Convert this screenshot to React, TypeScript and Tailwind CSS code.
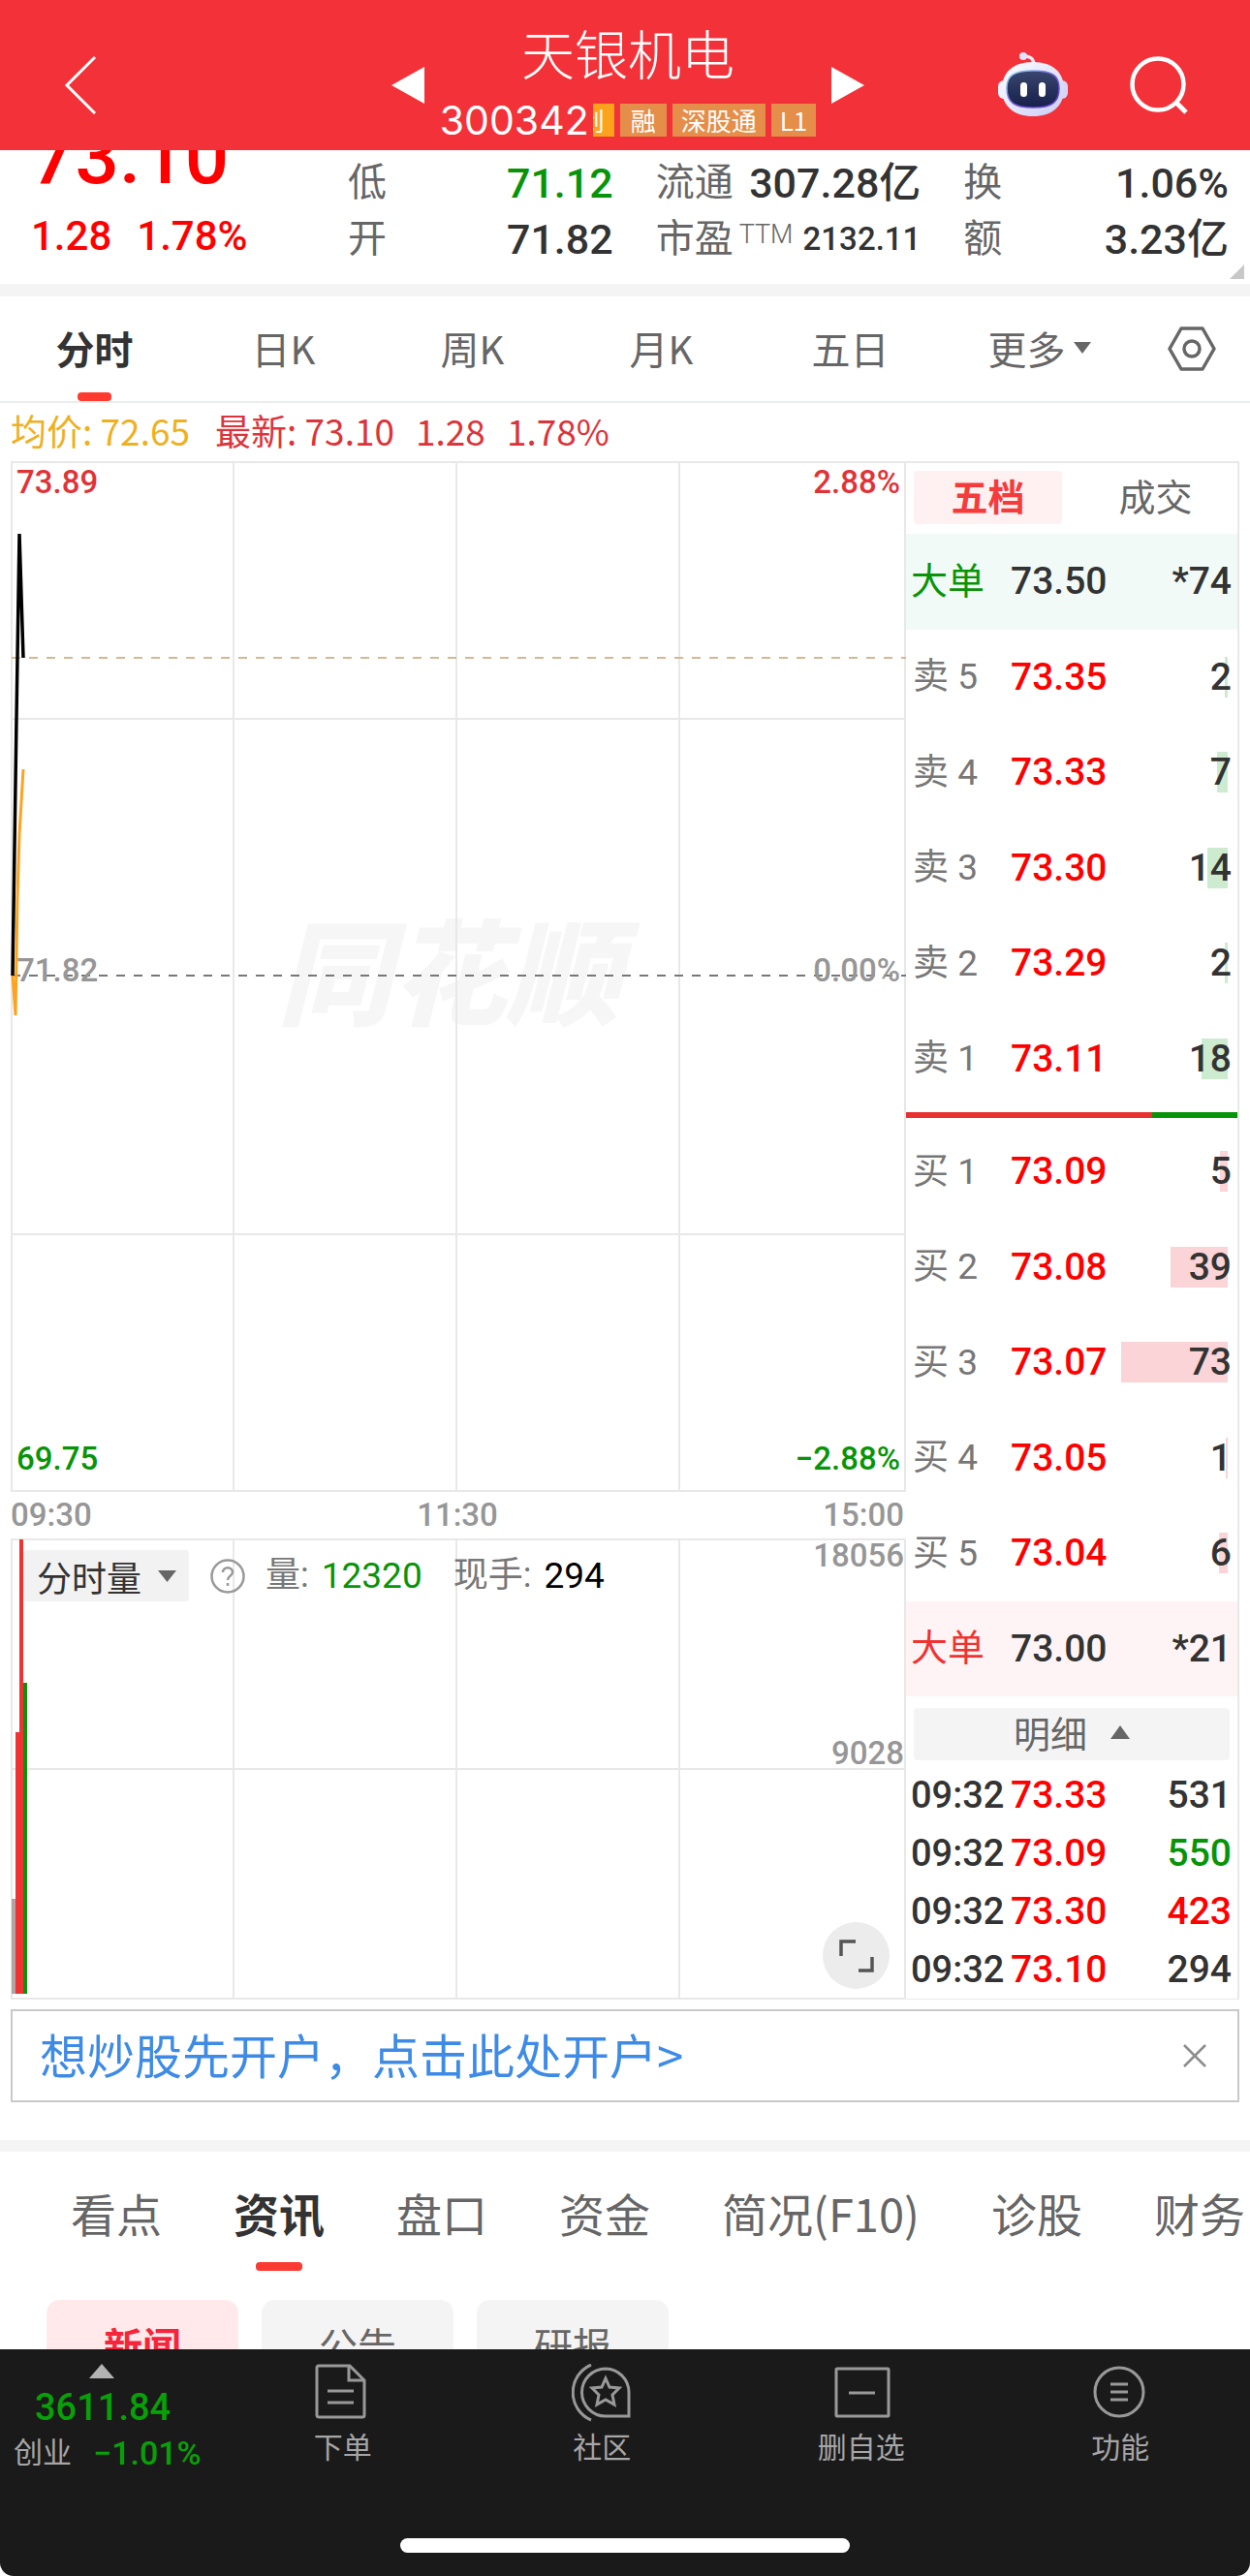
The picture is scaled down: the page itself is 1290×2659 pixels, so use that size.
import { useState } from "react";
import clsx from "clsx";

const stats = [
  [
    { label: "低", value: "71.12", color: "text-[#089408]" },
    { label: "开", value: "71.82", color: "text-[#333333]" },
  ],
  [
    { label: "流通", value: "307.28亿", color: "text-[#333333]" },
    { label: "市盈", note: "TTM", value: "2132.11", color: "text-[#333333]", small: true },
  ],
  [
    { label: "换", value: "1.06%", color: "text-[#333333]" },
    { label: "额", value: "3.23亿", color: "text-[#333333]" },
  ],
];

const periods = ["分时", "日K", "周K", "月K", "五日", "更多"];

const asks = [
  { level: 5, price: "73.35", volume: 2 },
  { level: 4, price: "73.33", volume: 7 },
  { level: 3, price: "73.30", volume: 14 },
  { level: 2, price: "73.29", volume: 2 },
  { level: 1, price: "73.11", volume: 18 },
];

const bids = [
  { level: 1, price: "73.09", volume: 5 },
  { level: 2, price: "73.08", volume: 39 },
  { level: 3, price: "73.07", volume: 73 },
  { level: 4, price: "73.05", volume: 1 },
  { level: 5, price: "73.04", volume: 6 },
];

const trades = [
  { time: "09:32", price: "73.33", volume: 531, color: "text-[#333333]" },
  { time: "09:32", price: "73.09", volume: 550, color: "text-[#089408]" },
  { time: "09:32", price: "73.30", volume: 423, color: "text-[#ff0000]" },
  { time: "09:32", price: "73.10", volume: 294, color: "text-[#333333]" },
];

const sections = ["看点", "资讯", "盘口", "资金", "简况(F10)", "诊股", "财务"];
const newsTabs = ["新闻", "公告", "研报"];

const num = "font-['Roboto','Noto_Sans_CJK_SC',sans-serif]";

const RobotIcon = () => (
  <svg className="h-[68px] w-[72px]" viewBox="0 0 72 68" fill="none">
    <defs>
      <linearGradient id="shell" x1="0" y1="0" x2="1" y2="1">
        <stop offset="0" stopColor="#ffffff" />
        <stop offset="1" stopColor="#c9cdf6" />
      </linearGradient>
      <linearGradient id="rim" x1="0" y1="0" x2="1" y2="1">
        <stop offset="0" stopColor="#8fe4ee" />
        <stop offset="0.5" stopColor="#7a5be0" />
        <stop offset="1" stopColor="#5a35d8" />
      </linearGradient>
      <linearGradient id="visor" x1="0" y1="0" x2="0" y2="1">
        <stop offset="0" stopColor="#39466e" />
        <stop offset="1" stopColor="#16204a" />
      </linearGradient>
    </defs>
    <path d="M26 4 Q37 3 37 14" stroke="#f4e6f5" strokeWidth="3.5" />
    <circle cx="26" cy="4" r="4" fill="#e6e3fb" />
    <rect x="0" y="29" width="12" height="19" rx="6" fill="#f0effd" />
    <rect x="60" y="29" width="12" height="19" rx="6" fill="#d8d5fa" />
    <path d="M36 10 C57 10 68 21 68 38 C68 56 55 66 36 66 C17 66 4 56 4 38 C4 21 15 10 36 10Z" fill="url(#shell)" />
    <path
      d="M36 19 C56 19 63 24 63 37 C63 52 55 57 36 57 C17 57 9 52 9 37 C9 24 16 19 36 19Z"
      fill="url(#visor)"
      stroke="url(#rim)"
      strokeWidth="1.5"
    />
    <rect x="23" y="31" width="7" height="15" rx="3.5" fill="#fff" />
    <rect x="42" y="31" width="7" height="15" rx="3.5" fill="#fff" />
  </svg>
);

const Header = () => (
  <header className="grid grid-cols-[1fr_auto_1fr] items-center bg-[#f33138] pl-[6px] pt-[21px] text-white">
    <button aria-label="返回" className="ml-[60px] justify-self-start">
      <svg className="h-[62px] w-[34px]" viewBox="0 0 34 62" fill="none" stroke="currentColor" strokeWidth="3">
        <path d="M32 2 L3 31 L32 60" />
      </svg>
    </button>

    <div className="flex items-center gap-4">
      <button aria-label="上一只">
        <svg className="h-[38px] w-[34px]" viewBox="0 0 34 38" fill="currentColor">
          <path d="M34 0 V38 L0 19Z" />
        </svg>
      </button>
      <div className="flex flex-col items-center pb-[14px]">
        <h1 className="text-[55px] font-light leading-[64px]">天银机电</h1>
        <div className="mt-[22px] flex h-[34px] items-center gap-[6px] text-[26px] leading-[34px]">
          <div className="flex items-center">
            <span className="mr-1 font-['Inter',sans-serif] text-[41px]">300342</span>
            <span className="flex h-[34px] w-[22px] justify-end overflow-hidden bg-[#fba31c] pr-[10px]">创</span>
          </div>
          <span className="bg-[#e58e49] px-[11px]">融</span>
          <span className="bg-[#e58e49] px-[9px]">深股通</span>
          <span className="bg-[#e58e49] px-[9px]">L1</span>
        </div>
      </div>
      <button aria-label="下一只">
        <svg className="h-[38px] w-[34px]" viewBox="0 0 34 38" fill="currentColor">
          <path d="M0 0 V38 L34 19Z" />
        </svg>
      </button>
    </div>

    <div className="flex items-center gap-16 justify-self-end pr-16">
      <button aria-label="智能助手">
        <RobotIcon />
      </button>
      <button aria-label="搜索">
        <svg className="h-[60px] w-[60px]" viewBox="0 0 60 60" fill="none" stroke="currentColor" strokeWidth="4.5">
          <circle cx="29" cy="29" r="26.5" />
          <path d="M47 47 L58 58" strokeWidth="5" />
        </svg>
      </button>
    </div>
  </header>
);

const Quote = () => (
  <section className={clsx("relative flex h-[138px] overflow-hidden pl-8 pr-[22px] font-medium", num)}>
    <div className="w-[327px] text-[#ff0000]">
      <p className="-mt-[33px] text-[80px] leading-[80px]">73.10</p>
      <p className="mt-[18px] flex gap-[26px] text-[42px] leading-[48px]">
        <span>1.28</span>
        <span>1.78%</span>
      </p>
    </div>
    <div className="grid flex-1 grid-cols-3 gap-x-11 pt-[5px]">
      {stats.map((column, i) => (
        <dl key={i}>
          {column.map((s) => (
            <div key={s.label} className="flex h-[58px] items-center justify-between whitespace-nowrap">
              <dt className="flex items-start gap-[6px] text-[40px] font-normal leading-[58px] text-[#666666]">
                {s.label}
                {s.note && <small className="text-[27px] font-light leading-[48px]">{s.note}</small>}
              </dt>
              <dd className={clsx(s.small ? "text-[33px]" : "text-[43px]", s.color)}>{s.value}</dd>
            </div>
          ))}
        </dl>
      ))}
    </div>
    <svg className="absolute bottom-[5px] right-[6px] h-[15px] w-[15px]" viewBox="0 0 15 15" fill="#c8c8c8">
      <path d="M15 0 V15 H0Z" />
    </svg>
  </section>
);

const PeriodTabs = () => {
  const [active, setActive] = useState("分时");

  return (
    <nav className="flex border-b-2 border-[#ebecee]">
      <div className="grid flex-1 grid-cols-6">
        {periods.map((p) => (
          <button
            key={p}
            onClick={() => setActive(p)}
            className={clsx(
              "flex flex-col items-center pt-[29px] text-[40px] leading-[48px]",
              active === p ? "font-bold text-[#333333]" : "text-[#666666]"
            )}
          >
            <span className="flex items-center gap-2">
              {p}
              {p === "更多" && (
                <svg className="h-3 w-[18px]" viewBox="0 0 18 12" fill="currentColor">
                  <path d="M0 0 H18 L9 12Z" />
                </svg>
              )}
            </span>
            <span className={clsx("mt-[22px] h-[9px] w-[35px] rounded", active === p && "bg-[#ff3b30]")} />
          </button>
        ))}
      </div>
      <button aria-label="设置" className="flex w-[120px] items-center justify-center text-[#666666]">
        <svg className="h-[46px] w-[50px]" viewBox="0 0 50 46" fill="none" stroke="currentColor" strokeWidth="3.5">
          <path d="M14 2 H36 L48 23 L36 44 H14 L2 23Z" strokeLinejoin="round" />
          <circle cx="25" cy="23" r="8" />
        </svg>
      </button>
    </nav>
  );
};

const PriceChart = () => (
  <div className={clsx("relative h-[1064px] text-[33px] font-medium leading-[36px]", num)}>
    <div className="absolute inset-0 flex items-center justify-center pb-5 pr-5 font-['Noto_Sans_CJK_SC',sans-serif] text-[118px] font-black italic text-[#f6f6f6]">
      同花顺
    </div>
    <svg className="absolute inset-0 h-full w-full" viewBox="0 0 924 1064" preserveAspectRatio="none" fill="none">
      <path
        d="M1 0 V1064 M230 0 V1064 M460 0 V1064 M690 0 V1064 M923 0 V1064 M0 1 H924 M0 266 H924 M0 798 H924 M0 1063 H924"
        stroke="#e8e8e8"
        strokeWidth="2"
      />
      <path d="M1 203 H924" stroke="#d3b892" strokeWidth="2" strokeDasharray="9 9" />
      <path d="M1 531 H924" stroke="#777777" strokeWidth="2" strokeDasharray="9 9" />
    </svg>
    <span className="absolute left-[6px] top-1 text-[#e03338]">73.89</span>
    <span className="absolute right-[6px] top-1 text-[#e03338]">2.88%</span>
    <span className="absolute left-[6px] top-[508px] text-[#969696]">71.82</span>
    <span className="absolute right-[6px] top-[508px] text-[#969696]">0.00%</span>
    <span className="absolute bottom-4 left-[6px] text-[#089408]">69.75</span>
    <span className="absolute bottom-4 right-[6px] text-[#089408]">−2.88%</span>
    <svg className="absolute inset-0 h-full w-full" viewBox="0 0 924 1064" preserveAspectRatio="none" fill="none">
      <path d="M2 531 L6 265 L9 75 L13 203" stroke="#000000" strokeWidth="3.5" />
      <path d="M2 531 L5 572 L7 450 L9 385 L13 318" stroke="#ffa31f" strokeWidth="3" />
    </svg>
  </div>
);

const VolumeChart = () => (
  <div className="relative h-[476px]">
    <svg className="absolute inset-0 h-full w-full" viewBox="0 0 924 476" preserveAspectRatio="none" fill="none">
      <path
        d="M1 0 V476 M230 0 V476 M460 0 V476 M690 0 V476 M923 0 V476 M0 1 H924 M0 238 H924 M0 475 H924"
        stroke="#e8e8e8"
        strokeWidth="2"
      />
      <rect x="1" y="372" width="4" height="98" fill="#b3a3a3" />
      <rect x="5" y="200" width="8" height="270" fill="#ef3232" />
      <rect x="9" y="1" width="4" height="469" fill="#ef3232" />
      <rect x="13" y="149" width="4" height="321" fill="#0a920a" />
    </svg>

    <div className="relative flex items-center pl-[13px] pt-3 text-[36px]">
      <label className="relative flex items-center">
        <span className="sr-only">指标</span>
        <select className="h-[53px] w-[171px] appearance-none rounded bg-[#f2f2f2] pl-[14px] text-[#333333]">
          <option>分时量</option>
        </select>
        <svg className="pointer-events-none absolute right-[13px] h-3 w-[19px]" viewBox="0 0 19 12" fill="#666666">
          <path d="M0 0 H19 L9.5 12Z" />
        </svg>
      </label>
      <button aria-label="说明" className="ml-[22px]">
        <svg className="h-9 w-9" viewBox="0 0 36 36" fill="none" stroke="#999999" strokeWidth="2.5">
          <circle cx="18" cy="18" r="16.5" />
          <path d="M13 14 C13 7.5 23 7.5 23 14 C23 17.5 18 17.5 18 22 M18 25 V28" />
        </svg>
      </button>
      <p className={clsx("ml-[21px] flex leading-[53px] text-[#777777]", num)}>
        <span>量:</span>
        <span className="ml-[13px] text-[37px] text-[#089408]">12320</span>
        <span className="ml-[32px]">现手:</span>
        <span className="ml-[13px] text-[37px] text-black">294</span>
      </p>
    </div>

    <span className={clsx("absolute right-[2px] top-0 text-[33px] font-medium leading-[36px] text-[#969696]", num)}>18056</span>
    <span className={clsx("absolute bottom-[236px] right-[2px] text-[33px] font-medium leading-[36px] text-[#969696]", num)}>
      9028
    </span>
    <button
      aria-label="全屏"
      className="absolute bottom-[11px] right-[17px] flex h-[69px] w-[69px] items-center justify-center rounded-full bg-[#ececec]"
    >
      <svg className="h-9 w-9" viewBox="0 0 36 36" fill="none" stroke="#555555" strokeWidth="3.5">
        <path d="M2 18 V3 H17 M34 19 V33 H20" />
      </svg>
    </button>
  </div>
);

type Level = { level: number; price: string; volume: number };

const LevelRow = ({ side, row }: { side: "卖" | "买"; row: Level }) => (
  <tr>
    <th scope="row" className="w-[108px] pl-[7px] text-left text-[37px] font-normal text-[#777777]">
      {side} {row.level}
    </th>
    <td className="text-[#ff0000]">{row.price}</td>
    <td className="relative pr-[6px] text-right text-[#333333]">
      <span
        className={clsx(
          "absolute right-[10px] top-1/2 h-[42px] -translate-y-1/2",
          side === "卖" ? "bg-[#cdebce]" : "bg-[#fad4d6]"
        )}
        style={{ width: Math.round(row.volume * 1.5) }}
      />
      <span className="relative">{row.volume}</span>
    </td>
  </tr>
);

const BigOrderRow = ({ price, volume, buy }: { price: string; volume: string; buy?: boolean }) => (
  <tr className={buy ? "bg-[#fff4f5]" : "bg-[#f1faf6]"}>
    <th
      scope="row"
      className={clsx("w-[108px] pl-[5px] text-left text-[38px] font-normal", buy ? "text-[#ef3232]" : "text-[#089408]")}
    >
      大单
    </th>
    <td className="text-[#333333]">{price}</td>
    <td className="pr-[6px] text-right text-[#333333]">{volume}</td>
  </tr>
);

const OrderBook = () => {
  const [tab, setTab] = useState("五档");
  const table = clsx("w-full table-fixed text-[39px] font-medium", num);

  return (
    <aside className="w-[344px] border-b border-r-2 border-t-2 border-[#e8e8e8]">
      <div className="flex h-[73px] gap-5 px-2 pt-2 text-[38px]">
        {["五档", "成交"].map((t) => (
          <button
            key={t}
            onClick={() => setTab(t)}
            className={clsx(
              "h-[55px] flex-1 rounded pb-[5px] leading-[50px]",
              tab === t ? "bg-[#fff1f1] font-bold text-[#f53b3b]" : "text-[#666666]"
            )}
          >
            {t}
          </button>
        ))}
      </div>

      <table className={clsx(table, "h-[591px]")}>
        <tbody>
          <BigOrderRow price="73.50" volume="*74" />
          {asks.map((row) => (
            <LevelRow key={row.level} side="卖" row={row} />
          ))}
        </tbody>
      </table>

      {/* buy / sell ratio */}
      <div className="flex py-[6px]">
        <div className="h-[6px] flex-[254] bg-[#e83232]" />
        <div className="h-[6px] flex-[88] bg-[#089408]" />
      </div>

      <table className={clsx(table, "h-[591px]")}>
        <tbody>
          {bids.map((row) => (
            <LevelRow key={row.level} side="买" row={row} />
          ))}
          <BigOrderRow price="73.00" volume="*21" buy />
        </tbody>
      </table>

      <div className="px-2 pb-[6px] pt-3">
        <button className="flex h-[54px] w-full items-center justify-center gap-6 rounded bg-[#f4f4f4] pb-1 text-[38px] leading-[50px] text-[#666666]">
          明细
          <svg className="h-[14px] w-5" viewBox="0 0 20 14" fill="currentColor">
            <path d="M10 0 L20 14 H0Z" />
          </svg>
        </button>
      </div>

      <table className={clsx(table, "h-[240px]")}>
        <tbody>
          {trades.map((t, i) => (
            <tr key={i}>
              <td className="w-[108px] whitespace-nowrap pl-[5px] text-[38px] text-[#333333]">{t.time}</td>
              <td className="text-[#ff0000]">{t.price}</td>
              <td className={clsx("pr-[6px] text-right", t.color)}>{t.volume}</td>
            </tr>
          ))}
        </tbody>
      </table>
    </aside>
  );
};

const SectionTabs = () => {
  const [active, setActive] = useState("资讯");

  return (
    <nav className="flex gap-[74px] overflow-hidden whitespace-nowrap pl-[73px] pt-[31px] text-[47px] leading-[64px]">
      {sections.map((s) => (
        <button
          key={s}
          onClick={() => setActive(s)}
          className={clsx("flex shrink-0 flex-col items-center", active === s ? "font-bold text-[#333333]" : "text-[#666666]")}
        >
          {s}
          <span className={clsx("mt-[19px] h-[9px] w-12 rounded", active === s && "bg-[#fb3a32]")} />
        </button>
      ))}
    </nav>
  );
};

const NewsChips = () => {
  const [active, setActive] = useState("新闻");

  return (
    <div className="mt-[30px] flex h-[51px] items-start gap-6 overflow-hidden pl-12">
      {newsTabs.map((n) => (
        <button
          key={n}
          onClick={() => setActive(n)}
          className={clsx(
            "h-[92px] w-[198px] shrink-0 rounded-[14px] text-[40px] leading-[88px]",
            active === n ? "bg-[#ffe9ea] font-bold text-[#f5253c]" : "bg-[#f4f4f4] text-[#666666]"
          )}
        >
          {n}
        </button>
      ))}
    </div>
  );
};

const actions = [
  {
    label: "下单",
    icon: (
      <>
        <path d="M5 2 H38 L53 17 V53 Q53 55 51 55 H7 Q4 55 4 53 V4 Q4 2 6 2Z" />
        <path d="M37 2 V17 H53 M15 28 H42 M15 40 H42" />
      </>
    ),
  },
  {
    label: "社区",
    icon: (
      <>
        <path d="M35 5 A24.5 24.5 0 0 0 35 54 H59 V29 A24.5 24.5 0 0 0 35 5Z" />
        <path d="M20 1 A31 31 0 0 0 20 58" />
        <path d="M35 15 L39 24 L49 25 L42 32 L44 42 L35 37 L26 42 L28 32 L21 25 L31 24Z" />
      </>
    ),
  },
  {
    label: "删自选",
    icon: (
      <>
        <rect x="5" y="5" width="54" height="49" rx="1" />
        <path d="M18 30 H45" />
      </>
    ),
  },
  {
    label: "功能",
    icon: (
      <>
        <circle cx="30" cy="29" r="25" />
        <path d="M21 21 H39 M21 29 H39 M21 37 H39" />
      </>
    ),
  },
];

const BottomBar = () => (
  <footer className="rounded-b-[14px] bg-[#1a1a1a] pb-6 text-[#a6a6a6]">
    <div className="flex h-[195px]">
      <button className={clsx("flex w-[220px] flex-col items-start pt-[15px]", num)}>
        <svg className="ml-[92px] h-[15px] w-[26px]" viewBox="0 0 26 15" fill="#b3b3b3">
          <path d="M13 0 L26 15 H0Z" />
        </svg>
        <span className="ml-[36px] mt-2 text-[38px] font-medium leading-[44px] text-[#08a008]">3611.84</span>
        <span className="ml-[14px] mt-[3px] flex items-center gap-[22px] text-[30px] leading-[44px]">
          创业
          <span className="text-[34px] font-medium text-[#08a008]">−1.01%</span>
        </span>
      </button>
      <div className="grid flex-1 grid-cols-4">
        {actions.map((a) => (
          <button key={a.label} className="flex flex-col items-center pt-[15px] text-[30px] leading-[40px]">
            <svg className="h-[60px] w-[62px]" viewBox="0 0 62 60" fill="none" stroke="#999999" strokeWidth="3">
              {a.icon}
            </svg>
            <span className="mt-1">{a.label}</span>
          </button>
        ))}
      </div>
    </div>
    <div className="mx-auto h-[15px] w-[36%] rounded-full bg-white" />
  </footer>
);

const App = () => (
  <div className="min-h-screen bg-white font-['Noto_Sans_CJK_SC',sans-serif]">
    <Header />
    <main>
      <Quote />
      <div className="h-[13px] bg-[#f4f4f4]" />
      <PeriodTabs />

      <p className="flex gap-[22px] pl-[11px] text-[37px] leading-[56px] text-[#dc343a]">
        <span className="pr-1 text-[#efb01e]">均价: 72.65</span>
        <span>最新: 73.10</span>
        <span>1.28</span>
        <span>1.78%</span>
      </p>

      <div className="mx-[11px] mt-1 flex">
        <div className="min-w-0 flex-1">
          <PriceChart />
          <div className={clsx("flex h-12 items-center justify-between pr-[2px] text-[33px] font-medium text-[#969696]", num)}>
            <span>09:30</span>
            <span>11:30</span>
            <span>15:00</span>
          </div>
          <VolumeChart />
        </div>
        <OrderBook />
      </div>

      <div className="mx-[11px] mb-[39px] mt-[10px] flex h-24 items-center justify-between border-2 border-[#c8c8c8] pl-7 pr-8">
        <a href="#open" className="pb-1 text-[49px] leading-[60px] text-[#3d8be6]">
          想炒股先开户，点击此处开户&gt;
        </a>
        <button aria-label="关闭">
          <svg className="h-6 w-6" viewBox="0 0 24 24" stroke="#8c8c8c" strokeWidth="2.5">
            <path d="M1 1 L23 23 M23 1 L1 23" />
          </svg>
        </button>
      </div>

      <div className="h-3 bg-[#f4f4f4]" />
      <SectionTabs />
      <NewsChips />
    </main>
    <BottomBar />
  </div>
);

export default App;
